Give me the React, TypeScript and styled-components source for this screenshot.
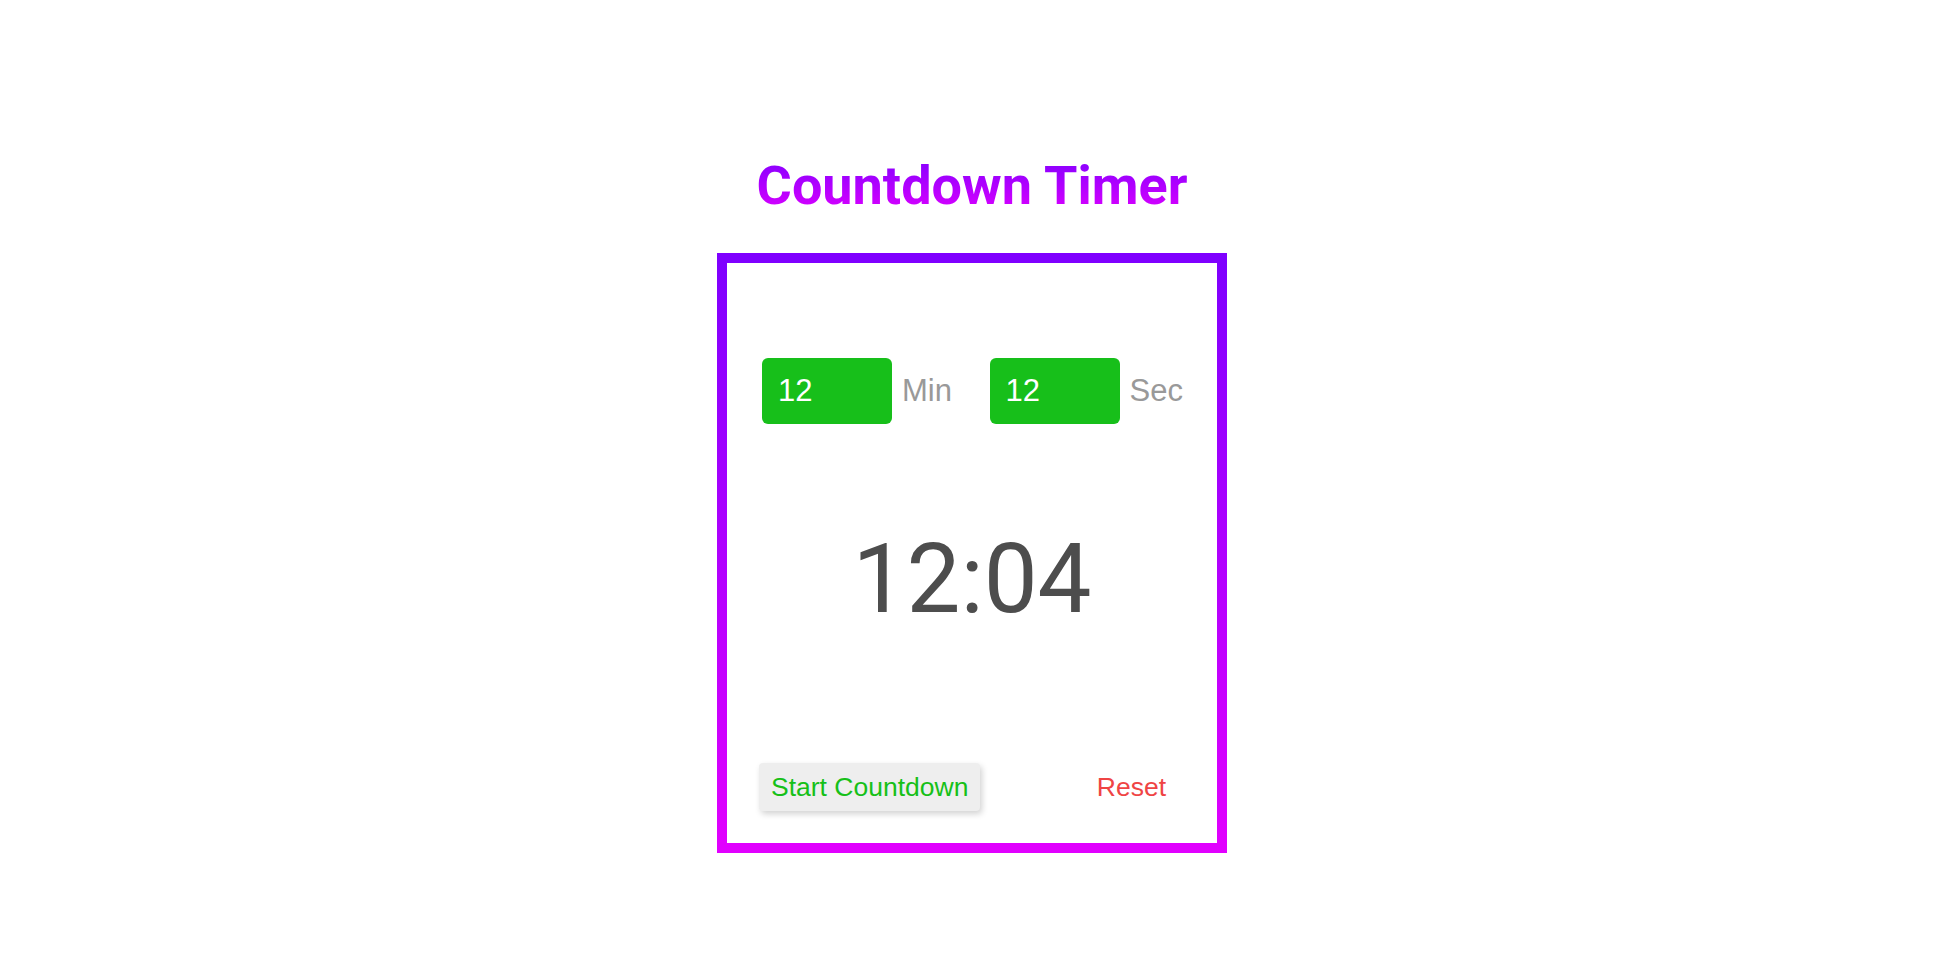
import React, { useState } from 'react'
import styled, { createGlobalStyle } from 'styled-components'

const GlobalStyle = createGlobalStyle`
  html, body {
    margin: 0;
    padding: 0;
    background: #fff;
  }
`

const Page = styled.div`
  display: flex;
  flex-direction: column;
  align-items: center;
  padding-top: 154px;
  font-family: 'Liberation Sans', Arial, sans-serif;
`

const Title = styled.h1`
  margin: 0;
  font-family: Roboto, 'Liberation Sans', sans-serif;
  font-weight: 700;
  font-size: 54px;
  line-height: normal;
  background: linear-gradient(to bottom, #7f00ff, #e100ff);
  -webkit-background-clip: text;
  background-clip: text;
  color: transparent;
`

const Card = styled.div`
  box-sizing: border-box;
  width: 510px;
  height: 600px;
  margin-top: 36px;
  border: 10px solid;
  border-image: linear-gradient(to bottom, #7f00ff, #e100ff) 1;
  display: flex;
  flex-direction: column;
`

const InputRow = styled.div`
  display: flex;
  justify-content: space-between;
  padding: 0 34px 0 35px;
  margin-top: 95px;
`

const Field = styled.label`
  display: flex;
  align-items: center;
  gap: 10px;
`

const NumberInput = styled.input`
  box-sizing: border-box;
  width: 130px;
  height: 66px;
  border: none;
  border-radius: 6px;
  background: #17bf1a;
  color: #fff;
  font-family: 'Liberation Sans', Arial, sans-serif;
  font-size: 31px;
  padding: 0 0 0 16px;
  outline: none;
`

const Unit = styled.span`
  color: #999;
  font-size: 31px;
`

const Display = styled.div`
  margin-top: 107px;
  text-align: center;
  font-family: Roboto, 'Liberation Sans', sans-serif;
  font-size: 96px;
  line-height: 96px;
  color: #4d4d4d;
`

const ButtonRow = styled.div`
  display: flex;
  justify-content: space-between;
  align-items: center;
  margin-top: auto;
  margin-bottom: 32px;
  padding: 0 39px 0 32px;
`

const Button = styled.button<{ $tone: 'start' | 'reset' }>`
  box-sizing: border-box;
  height: 48px;
  padding: 0 12px;
  border: none;
  border-radius: 4px;
  font-family: 'Liberation Sans', Arial, sans-serif;
  font-size: 26.5px;
  cursor: pointer;
  color: ${p => (p.$tone === 'start' ? '#16c018' : '#ef4444')};
  background: ${p => (p.$tone === 'start' ? '#eeeeee' : 'transparent')};
  box-shadow: ${p => (p.$tone === 'start' ? '2px 3px 6px rgba(0, 0, 0, 0.18)' : 'none')};
`

export default function App() {
  const [minutes, setMinutes] = useState('12')
  const [seconds, setSeconds] = useState('12')

  return (
    <>
      <GlobalStyle />
      <Page>
        <Title>Countdown Timer</Title>
        <Card>
          <InputRow>
            <Field>
              <NumberInput value={minutes} onChange={e => setMinutes(e.target.value)} />
              <Unit>Min</Unit>
            </Field>
            <Field>
              <NumberInput value={seconds} onChange={e => setSeconds(e.target.value)} />
              <Unit>Sec</Unit>
            </Field>
          </InputRow>
          <Display>12:04</Display>
          <ButtonRow>
            <Button $tone="start">Start Countdown</Button>
            <Button $tone="reset">Reset</Button>
          </ButtonRow>
        </Card>
      </Page>
    </>
  )
}
